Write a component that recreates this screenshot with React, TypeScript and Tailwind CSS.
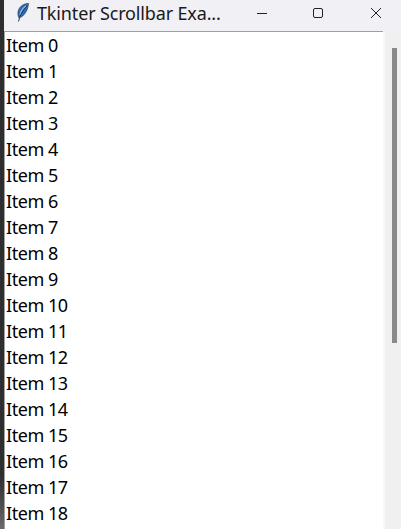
import React from "react";

const items = Array.from({ length: 19 }, (_, i) => `Item ${i}`);

function Feather() {
  return (
    <svg width="12" height="20" viewBox="0 0 12 20" className="shrink-0">
      <path d="M11.5 0.5 C7 0.5 2.5 3 1.2 8 C0.6 10.5 0.8 13 2 15 L5 13.5 C8.5 11 11 6.5 11.5 0.5 Z" fill="#2a6cb8" stroke="#38465c" strokeWidth="0.7" />
      <path d="M9 3 C6 5 3.5 8 3 12" stroke="#8fc0ea" strokeWidth="1.2" fill="none" />
      <path d="M10 3 C7 6 4 10 2.5 15 L1.5 18.5" stroke="#2f3645" strokeWidth="1" fill="none" />
    </svg>
  );
}

export default function App() {
  return (
    <div className="flex h-[529px] w-[401px] overflow-hidden bg-[#f0f0f0] font-['Noto_Sans',sans-serif]">
      <div className="h-full w-[4px] shrink-0 bg-gradient-to-b from-[#2e2e2e] via-[#2e2e2e] via-90% to-[#6a6a6a]" />
      <div className="flex min-w-0 flex-1 flex-col">
        <div className="flex h-[31px] shrink-0 items-center bg-[#f1f0f5]">
          <div className="ml-[12px] flex w-[14px] justify-center pb-[5px]">
            <Feather />
          </div>
          <span className="ml-[7px] pb-[6px] text-[18px] leading-[24px] tracking-[-0.15px] text-[#1a1a1a]">Tkinter Scrollbar Exa...</span>
          <div className="ml-auto flex items-center pb-[6px]">
            <svg width="12" height="12" viewBox="0 0 12 12" className="mr-[44px]">
              <path d="M1 6.5H11" stroke="#222" strokeWidth="1" />
            </svg>
            <svg width="12" height="12" viewBox="0 0 12 12" className="mr-[46px]">
              <rect x="1.5" y="1.5" width="9" height="9" rx="1.5" stroke="#222" strokeWidth="1" fill="none" />
            </svg>
            <svg width="12" height="12" viewBox="0 0 12 12" className="mr-[19px]">
              <path d="M1 1L11 11M11 1L1 11" stroke="#222" strokeWidth="1" />
            </svg>
          </div>
        </div>
        <div className="flex min-h-0 flex-1">
          <div className="w-[379px] shrink-0 overflow-hidden border-t border-l border-[#a0a0a0] bg-white pl-[1px] pt-[1px]">
            {items.map((t) => (
              <div key={t} className="h-[26px] text-[18px] leading-[25px] tracking-[-0.45px] text-black">{t}</div>
            ))}
          </div>
          <div className="w-[2px] shrink-0 bg-[#f9f9f9]" />
          <div className="flex-1 pt-[17px]">
            <div className="ml-[7px] h-[295px] w-[5px] bg-[#8a8a8a]" />
          </div>
        </div>
      </div>
    </div>
  );
}
